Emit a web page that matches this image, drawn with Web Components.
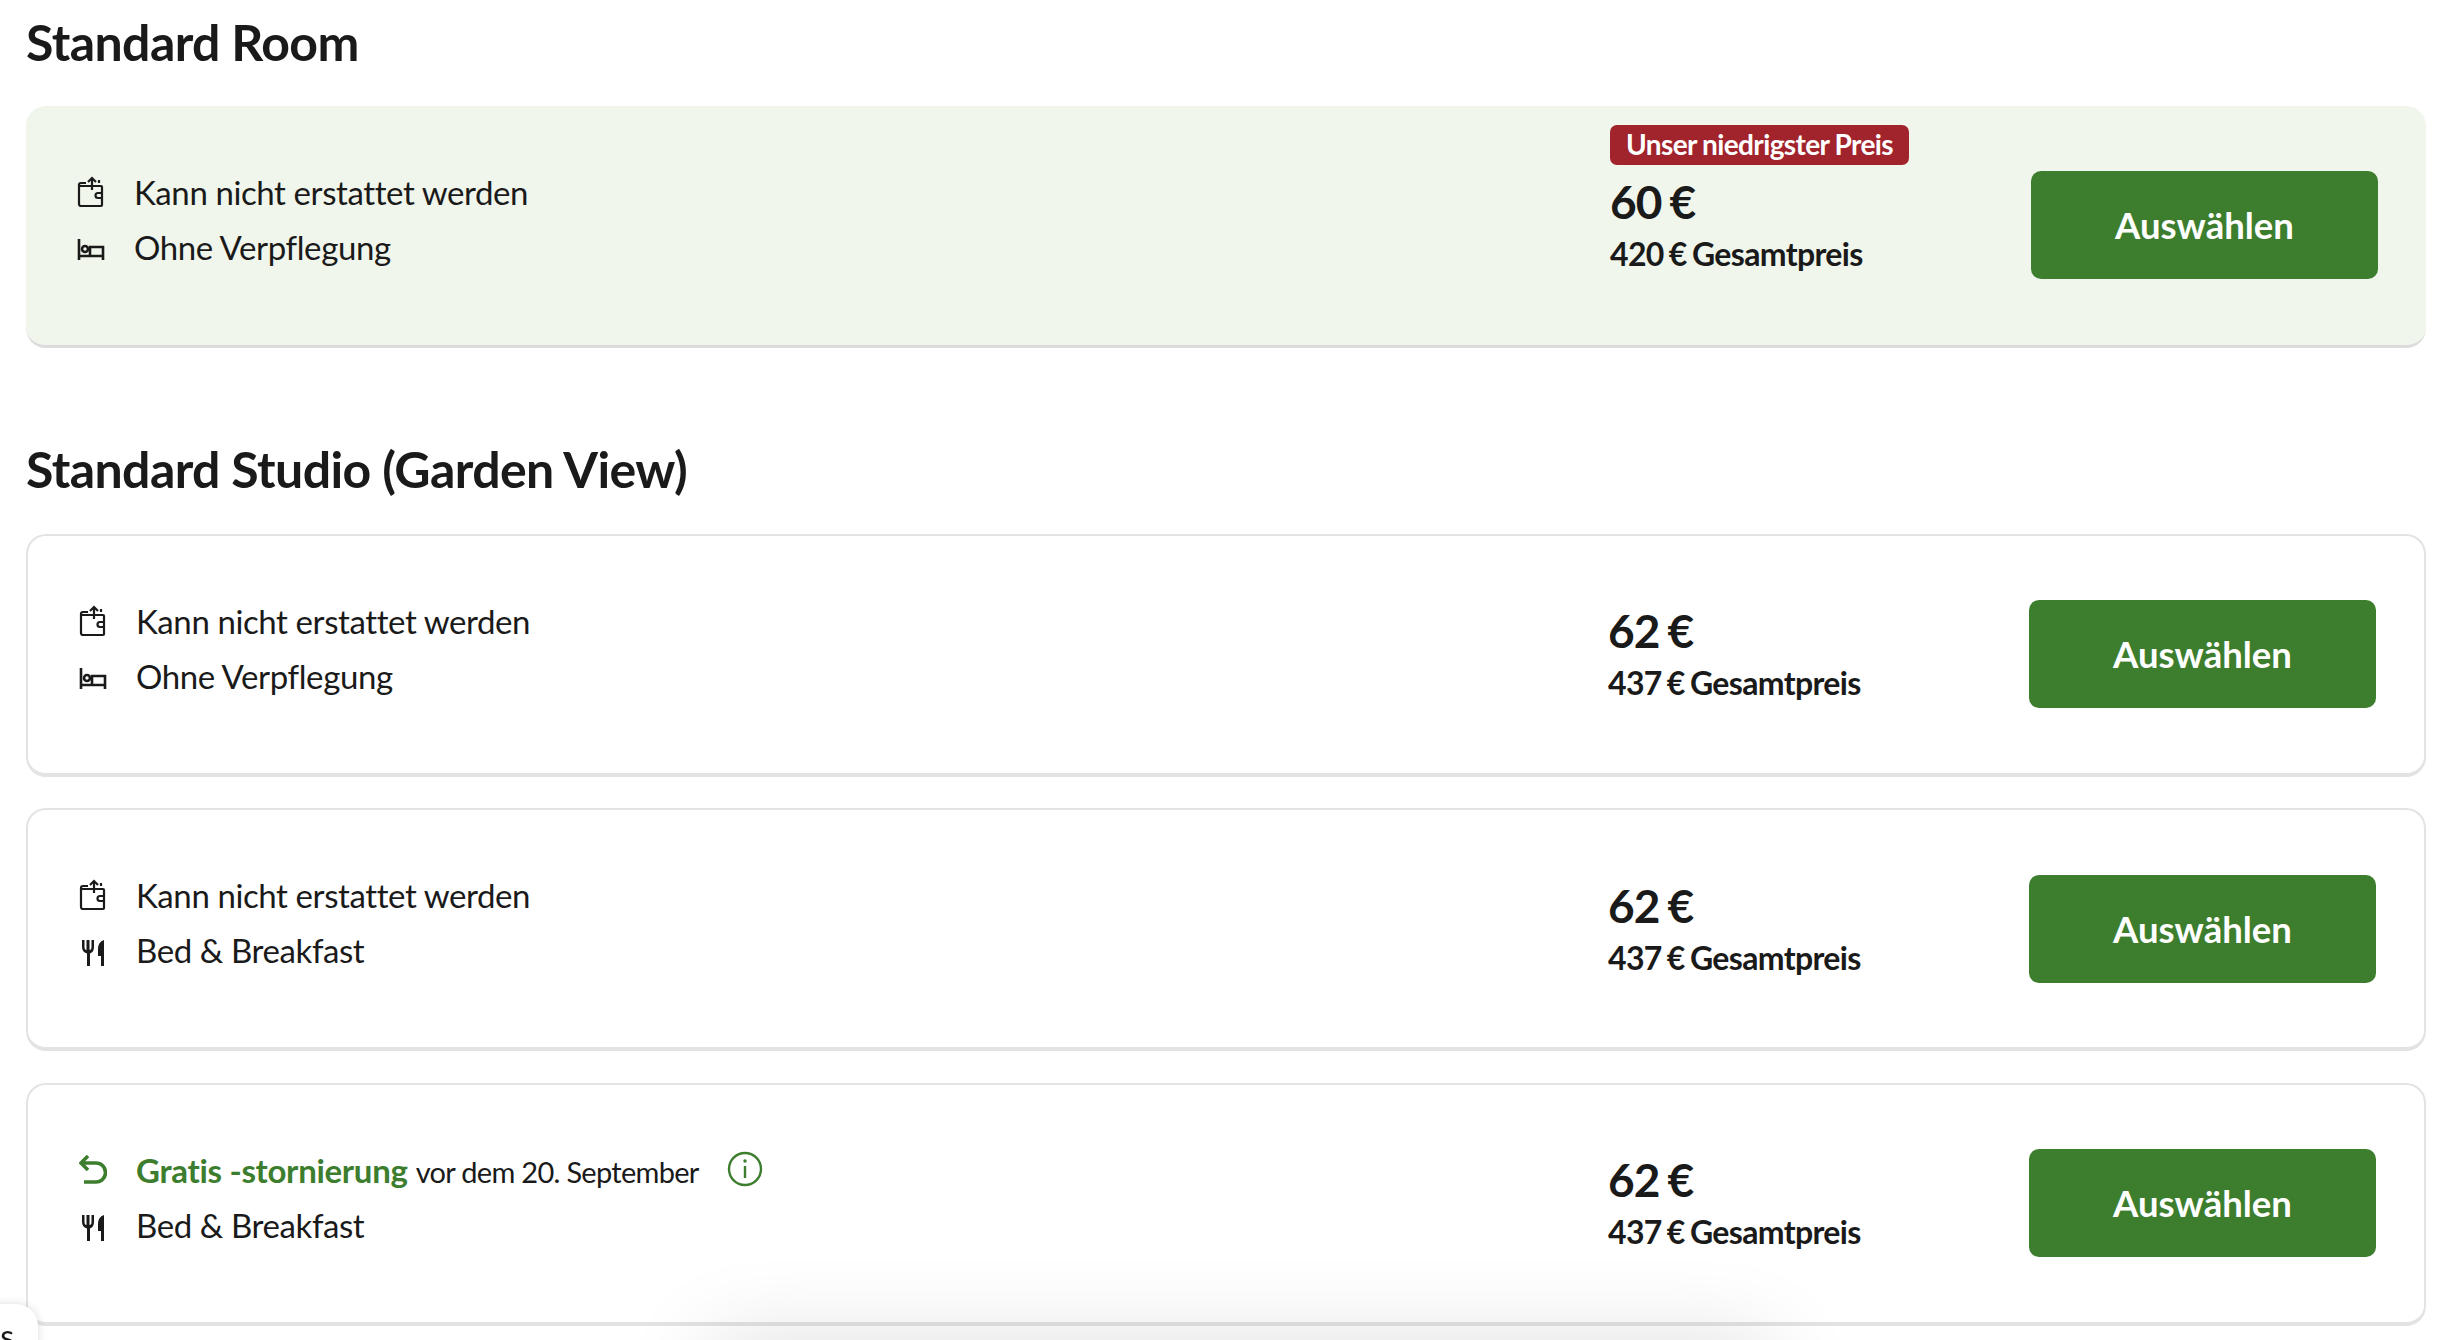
<!DOCTYPE html>
<html lang="de">
<head>
<meta charset="utf-8">
<title>Zimmer</title>
<style>
    html, body { margin: 0; height: 1340px; overflow: hidden; background: #fff; }
    body { font-family: Lato, "Liberation Sans", sans-serif; color: #1a1a1a; padding: 0 12px 0 26px; box-sizing: border-box; width: 2438px; }
</style>
</head>
<body>
<room-section name="Standard Room" first>
    <rate-card highlight>
        <rate-row icon="wallet">Kann nicht erstattet werden</rate-row>
        <rate-row icon="bed">Ohne Verpflegung</rate-row>
        <price-block slot="price" price="60 €" total="420 € Gesamtpreis" badge="Unser niedrigster Preis"></price-block>
    </rate-card>
</room-section>
<room-section name="Standard Studio (Garden View)">
    <rate-card>
        <rate-row icon="wallet">Kann nicht erstattet werden</rate-row>
        <rate-row icon="bed">Ohne Verpflegung</rate-row>
        <price-block slot="price" price="62 €" total="437 € Gesamtpreis"></price-block>
    </rate-card>
    <rate-card>
        <rate-row icon="wallet">Kann nicht erstattet werden</rate-row>
        <rate-row icon="food">Bed &amp; Breakfast</rate-row>
        <price-block slot="price" price="62 €" total="437 € Gesamtpreis"></price-block>
    </rate-card>
    <rate-card>
        <rate-row icon="undo" info><b>Gratis -stornierung</b> <small>vor dem 20. September</small></rate-row>
        <rate-row icon="food">Bed &amp; Breakfast</rate-row>
        <price-block slot="price" price="62 €" total="437 € Gesamtpreis"></price-block>
    </rate-card>
</room-section>
<corner-bubble>ss</corner-bubble>
<bottom-fade></bottom-fade>

<script>
/* iconos dibujados a mano, coordenadas en px del icono */
const ICONS = {
    wallet: `<svg width="28" height="32" viewBox="0 0 28 32" fill="none" stroke="#1a1a1a" stroke-width="2.200">
        <path d="M3 10h21a1 1 0 0 1 1 1v18a1 1 0 0 1-1 1H4a2 2 0 0 1-2-2V9a2 2 0 0 1 2-2h5"/>
        <path d="M15 14V2M11 6l4-4 4 4M22 7V4"/>
        <path d="M25 17h-4a2.500 2.500 0 0 0 0 5h4"/></svg>`,
    bed: `<svg class="low" width="28" height="21" viewBox="0 0 28 21" fill="none" stroke="#1a1a1a" stroke-width="2.600">
        <path d="M2 0v21M2 17h25M26 21V8H13v9"/><circle cx="8" cy="10" r="3"/></svg>`,
    food: `<svg class="low" width="24" height="26" viewBox="0 0 24 26" fill="#1a1a1a">
        <path d="M1 0h2.500v7q0 3 2 3V0h3v10q2 0 2-3V0h2.500v7q0 5-4 6.500V26h-3V13.500q-5-1.500-5-6.500z"/>
        <path d="M23 0v26h-3V16h-3V9q0-7 6-9z"/></svg>`,
    undo: `<svg width="28" height="30" viewBox="0 0 28 30" fill="none" stroke="#3d7e2e" stroke-width="3.600">
        <path d="M9 1L2 8l7 7"/><path d="M2 8h15a9.500 9.500 0 0 1 0 19H5"/></svg>`
};

/*seccion con el titulo de la habitacion y sus tarifas*/
class RoomSection extends HTMLElement {
    constructor() {
        super();
        this.attachShadow({ mode: 'open' });
        this.shadowRoot.innerHTML = `
            <style>
                :host { display: block; margin-top: 92px; }
                :host([first]) { margin-top: 13px; }
                :host([first]) h2 { margin-bottom: 35px; }
                h2 { margin: 0 0 36px; font: 700 50px/58px Lato, sans-serif; color: #1a1a1a; letter-spacing: -0.6px; }
                .list { display: flex; flex-direction: column; gap: 31.500px; }
            </style>
            <h2>${this.getAttribute('name')}</h2>
            <div class="list"><slot></slot></div>
        `;
    }
}
customElements.define('room-section', RoomSection);

/*tarjeta de una tarifa*/
class RateCard extends HTMLElement {
    constructor() {
        super();
        this.attachShadow({ mode: 'open' });
        this.shadowRoot.innerHTML = `
            <style>
                :host {
                    display: grid;
                    grid-template-columns: 1fr 421px 347px;
                    align-items: center;
                    height: 243px;
                    box-sizing: border-box;
                    padding: 0 48px;
                    border: 2px solid #e3e3e3;
                    border-bottom-width: 4px;
                    border-radius: 20px;
                    background: #fff;
                }
                :host([highlight]) {
                    height: 241.500px;
                    background: #f1f6ec;
                    border: 0;
                    border-bottom: 3px solid #dcdcdc;
                }
                .rows { display: flex; flex-direction: column; margin-top: -12px; }
                button {
                    height: 108px;
                    border: 0;
                    border-radius: 10px;
                    background: #3d7e2e;
                    color: #fff;
                    font: 700 36.500px Lato, sans-serif;
                    padding: 0;
                }
            </style>
            <div class="rows"><slot></slot></div>
            <slot name="price"></slot>
            <button>Auswählen</button>
        `;
    }
}
customElements.define('rate-card', RateCard);

/*fila con icono y texto*/
class RateRow extends HTMLElement {
    constructor() {
        super();
        this.attachShadow({ mode: 'open' });
        const info = this.hasAttribute('info') ? `
            <svg class="info" width="36" height="36" viewBox="0 0 36 36" fill="none" stroke="#3d7e2e" stroke-width="2.400">
                <circle cx="18" cy="18" r="16"/><path d="M18 15v12"/><circle cx="18" cy="10" r="1" fill="#3d7e2e" stroke-width="1.500"/>
            </svg>` : '';
        this.shadowRoot.innerHTML = `
            <style>
                :host { display: flex; align-items: center; height: 55px; font-size: 33px; letter-spacing: -0.4px; color: #1a1a1a; }
                .icon { width: 60px; display: flex; justify-content: center; flex: none; transform: translateX(-13px); }
                .icon svg { display: block; }
                .icon svg.low { margin-top: 6px; }
                .info { margin-left: 28px; margin-top: -1px; }
                ::slotted(b) { color: #3d7e2e; font-weight: 700; letter-spacing: -0.3px; }
                ::slotted(small) { font-size: 29px; letter-spacing: -0.7px; }
            </style>
            <span class="icon">${ICONS[this.getAttribute('icon')]}</span>
            <span><slot></slot></span>
            ${info}
        `;
    }
}
customElements.define('rate-row', RateRow);

/*precio por noche y total, con insignia opcional*/
class PriceBlock extends HTMLElement {
    constructor() {
        super();
        this.attachShadow({ mode: 'open' });
        const badge = this.getAttribute('badge');
        this.shadowRoot.innerHTML = `
            <style>
                :host { display: block; position: relative; color: #1a1a1a; font-weight: 700; margin-top: -2px; }
                .badge {
                    position: absolute;
                    left: 0;
                    top: -49px;
                    height: 40px;
                    line-height: 39px;
                    padding: 0 16px;
                    border-radius: 7px;
                    background: #a1232c;
                    color: #fff;
                    font-size: 28px;
                    letter-spacing: -0.6px;
                    word-spacing: -0.5px;
                    white-space: nowrap;
                }
                .price { font-size: 46px; line-height: 56px; letter-spacing: -1px; word-spacing: -2px; }
                .total { font-size: 32px; line-height: 40px; margin-top: 4px; letter-spacing: -0.65px; word-spacing: -2px; }
            </style>
            ${badge ? `<span class="badge">${badge}</span>` : ''}
            <div class="price">${this.getAttribute('price')}</div>
            <div class="total">${this.getAttribute('total')}</div>
        `;
    }
}
customElements.define('price-block', PriceBlock);

/*burbuja recortada en la esquina inferior izquierda*/
class CornerBubble extends HTMLElement {
    constructor() {
        super();
        this.attachShadow({ mode: 'open' });
        this.shadowRoot.innerHTML = `
            <style>
                :host {
                    position: fixed;
                    left: -40px;
                    top: 1304px;
                    width: 78px;
                    height: 80px;
                    box-sizing: border-box;
                    padding: 12px 24px 0 0;
                    text-align: right;
                    background: #fff;
                    border-radius: 22px;
                    box-shadow: 0 0 10px rgba(0,0,0,.14);
                    font-size: 32px;
                    color: #1a1a1a;
                    z-index: 3;
                }
            </style>
            <slot></slot>
        `;
    }
}
customElements.define('corner-bubble', CornerBubble);

/*sombra de la barra fija que queda fuera de la pantalla*/
class BottomFade extends HTMLElement {
    constructor() {
        super();
        this.attachShadow({ mode: 'open' });
        this.shadowRoot.innerHTML = `
            <style>
                :host {
                    position: fixed;
                    left: 720px;
                    top: 1352px;
                    width: 1040px;
                    height: 60px;
                    box-shadow: 0 0 90px 10px rgba(0,0,0,.134);
                    z-index: 2;
                    pointer-events: none;
                }
            </style>
        `;
    }
}
customElements.define('bottom-fade', BottomFade);
</script>
</body>
</html>
